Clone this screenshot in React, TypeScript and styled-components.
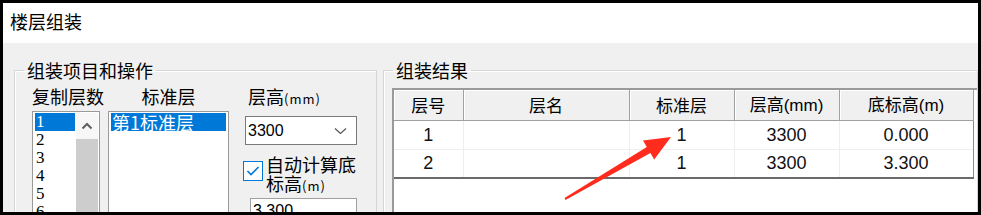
import React from 'react';
import styled, {createGlobalStyle} from 'styled-components';

const GlobalStyle = createGlobalStyle`
  html, body {
    margin: 0;
    padding: 0;
    background: #ffffff;
  }
  * {
    box-sizing: border-box;
  }
`

const cjk = `"Noto Sans CJK SC", "Noto Sans", sans-serif`

const Frame = styled.div`
  position: relative;
  width: 981px;
  height: 215px;
  border: 3px solid #000;
  display: flex;
  flex-direction: column;
  overflow: hidden;
  font-family: ${cjk};
  color: #000;
`

const TitleBar = styled.div`
  height: 40px;
  flex-shrink: 0;
  background: #fff;
  display: flex;
  align-items: center;
  padding: 0 0 4px 7px;
  font-size: 18px;
  line-height: 20px;
`

const Body = styled.div`
  flex: 1;
  background: #f0f0f0;
  display: flex;
  align-items: flex-start;
  padding: 17px 0 0 11px;
  gap: 6px;
  overflow: hidden;
`

const Group = styled.fieldset<{ width: number, padLeft: number, padTop: number }>`
  margin: 0;
  flex-shrink: 0;
  width: ${props => props.width}px;
  height: 220px;
  padding: ${props => props.padTop}px 0 0 ${props => props.padLeft}px;
  border: 1px solid #d5d5d5;
  box-shadow: inset 1px 1px 0 #fff;
  min-width: 0;
`

const Legend = styled.legend<{ offset: number }>`
  margin-left: ${props => props.offset}px;
  padding: 0 3px;
  font-size: 18px;
  line-height: 20px;
`

const Columns = styled.div`
  display: flex;
  align-items: flex-start;
`

const Column = styled.div<{ width: number, gapLeft: number }>`
  width: ${props => props.width}px;
  margin-left: ${props => props.gapLeft}px;
  display: flex;
  flex-direction: column;
`

const Label = styled.div<{ align?: string, indent?: number }>`
  font-size: 18px;
  line-height: 20px;
  white-space: nowrap;
  text-align: ${props => props.align || 'left'};
  padding-left: ${props => props.indent || 0}px;
`

const Small = styled.span`
  font-size: 13px;
  letter-spacing: 1px;
`

const ListBox = styled.div`
  margin-top: 5px;
  height: 110px;
  border: 1px solid #9a9a9a;
  background: #fff;
  display: flex;
  padding: 1px 1px 0 1px;
`

const Items = styled.div`
  flex: 1;
  display: flex;
  flex-direction: column;
`

const Item = styled.div<{ selected?: boolean, serif?: boolean }>`
  height: 18px;
  margin: 0 1px 0 1px;
  padding-left: 1px;
  line-height: 18px;
  font-size: ${props => props.serif ? '17px' : '18px'};
  font-family: ${props => props.serif ? `"Liberation Serif", serif` : cjk};
  background: ${props => props.selected ? '#0078d7' : 'transparent'};
  color: ${props => props.selected ? '#fff' : '#000'};
  white-space: nowrap;
`

const ScrollBar = styled.div`
  width: 22px;
  display: flex;
  flex-direction: column;
`

const ScrollButton = styled.div`
  height: 26px;
  background: #f7f7f7;
  display: flex;
  align-items: center;
  justify-content: center;
`

const ScrollThumb = styled.div`
  flex: 1;
  background: #cdcdcd;
`

const Combo = styled.div`
  margin-top: 7px;
  height: 29px;
  border: 1px solid #7a7a7a;
  background: #fff;
  display: flex;
  align-items: center;
  justify-content: space-between;
  padding: 0 9px 0 2px;
  font-family: "Liberation Sans", Arial, sans-serif;
  font-size: 16px;
`

const CheckRow = styled.div`
  margin-top: 10px;
  margin-left: -2px;
  display: flex;
  align-items: flex-start;
`

const CheckBox = styled.div`
  width: 20px;
  height: 20px;
  margin-top: 6px;
  border: 1px solid #0078d7;
  background: #fff;
  display: flex;
  align-items: center;
  justify-content: center;
  flex-shrink: 0;
`

const CheckLabel = styled.div`
  margin-left: 3px;
  font-size: 18px;
  line-height: 19px;
  white-space: nowrap;
`

const TextInput = styled.div`
  margin: 3px 0 0 5px;
  height: 26px;
  border: 1px solid #a0a0a0;
  background: #fff;
  padding: 3px 0 0 2px;
  font-family: "Liberation Sans", Arial, sans-serif;
  font-size: 16px;
  line-height: 18px;
`

const GridFrame = styled.div`
  height: 200px;
  background: #fff;
  border-left: 2px solid #9a9a9a;
  border-top: 2px solid #9a9a9a;
`

const Table = styled.table`
  table-layout: fixed;
  border-collapse: collapse;
  width: 579px;
  font-family: "Liberation Sans", Arial, sans-serif;
`

const HeadCell = styled.th<{ width: number }>`
  width: ${props => props.width}px;
  height: 30px;
  padding: 0;
  background: #f0f0f0;
  border-right: 1px solid #a0a0a0;
  border-bottom: 1px solid #a0a0a0;
  box-shadow: inset 1px 1px 0 #fff;
  font-family: ${cjk};
  font-weight: normal;
  font-size: 17px;
  line-height: 20px;
  text-align: center;
  white-space: nowrap;
`

const HeadUnit = styled.span`
  font-family: "Liberation Sans", Arial, sans-serif;
  font-size: 17px;
`

const Row = styled.tr<{ last?: boolean }>`
  height: 29px;
  border-bottom: ${props => props.last ? '2px solid #6a6a6a' : '1px solid #eeeeee'};
`

const Cell = styled.td<{ edge?: boolean }>`
  padding: 0;
  border-right: 1px solid ${props => props.edge ? '#8a8a8a' : '#eeeeee'};
  text-align: center;
  font-size: 18px;
  line-height: 20px;
  color: #111;
`

const Arrow = styled.svg`
  position: absolute;
  left: 0;
  top: 0;
  pointer-events: none;
`

const columns = [
    {title: '层号', width: 69},
    {title: '层名', width: 166},
    {title: '标准层', width: 105},
    {title: '层高', unit: '(mm)', width: 105},
    {title: '底标高', unit: '(m)', width: 134},
]

const rows = [
    ['1', '', '1', '3300', '0.000'],
    ['2', '', '1', '3300', '3.300'],
]

const copies = ['1', '2', '3', '4', '5', '6']

export default function App() {
    return (
        <>
            <GlobalStyle/>
            <Frame>
                <TitleBar>楼层组装</TitleBar>
                <Body>
                    <Group width={363} padLeft={17} padTop={6}>
                        <Legend offset={-8}>组装项目和操作</Legend>
                        <Columns>
                            <Column width={68} gapLeft={0}>
                                <Label>复制层数</Label>
                                <ListBox>
                                    <Items>
                                        {copies.map((c, i) => (
                                            <Item key={c} serif selected={i === 0}>{c}</Item>
                                        ))}
                                    </Items>
                                    <ScrollBar>
                                        <ScrollButton>
                                            <svg width="12" height="8" viewBox="0 0 12 8">
                                                <polyline points="1.5,6.5 6,2 10.5,6.5" fill="none"
                                                          stroke="#606060" strokeWidth="2"/>
                                            </svg>
                                        </ScrollButton>
                                        <ScrollThumb/>
                                    </ScrollBar>
                                </ListBox>
                            </Column>
                            <Column width={121} gapLeft={8}>
                                <Label align="center">标准层</Label>
                                <ListBox>
                                    <Items>
                                        <Item selected>第1标准层</Item>
                                    </Items>
                                </ListBox>
                            </Column>
                            <Column width={112} gapLeft={16}>
                                <Label indent={3}>层高<Small>(mm)</Small></Label>
                                <Combo>
                                    3300
                                    <svg width="13" height="8" viewBox="0 0 13 8">
                                        <polyline points="1,1.5 6.5,6.5 12,1.5" fill="none"
                                                  stroke="#555" strokeWidth="1.2"/>
                                    </svg>
                                </Combo>
                                <CheckRow>
                                    <CheckBox>
                                        <svg width="14" height="12" viewBox="0 0 14 12">
                                            <polyline points="1.5,6 5,9.5 12.5,2" fill="none"
                                                      stroke="#0078d7" strokeWidth="1.6"/>
                                        </svg>
                                    </CheckBox>
                                    <CheckLabel>自动计算底<br/>标高<Small>(m)</Small></CheckLabel>
                                </CheckRow>
                                <TextInput>3.300</TextInput>
                            </Column>
                        </Columns>
                    </Group>
                    <Group width={595} padLeft={8} padTop={8}>
                        <Legend offset={1}>组装结果</Legend>
                        <GridFrame>
                            <Table>
                                <thead>
                                <tr>
                                    {columns.map(col => (
                                        <HeadCell key={col.title} width={col.width}>
                                            {col.title}{col.unit && <HeadUnit>{col.unit}</HeadUnit>}
                                        </HeadCell>
                                    ))}
                                </tr>
                                </thead>
                                <tbody>
                                {rows.map((row, r) => (
                                    <Row key={r} last={r === rows.length - 1}>
                                        {row.map((value, c) => (
                                            <Cell key={c} edge={c === row.length - 1}>{value}</Cell>
                                        ))}
                                    </Row>
                                ))}
                                </tbody>
                            </Table>
                        </GridFrame>
                    </Group>
                </Body>
                <Arrow width="981" height="215" viewBox="0 0 981 215">
                    <polygon
                        points="668,134 651.2,156.6 647.4,150.1 562.5,196.9 561.5,195.1 643.8,144.1 640,137.6"
                        fill="#ff2b1c"/>
                </Arrow>
            </Frame>
        </>
    );
}
